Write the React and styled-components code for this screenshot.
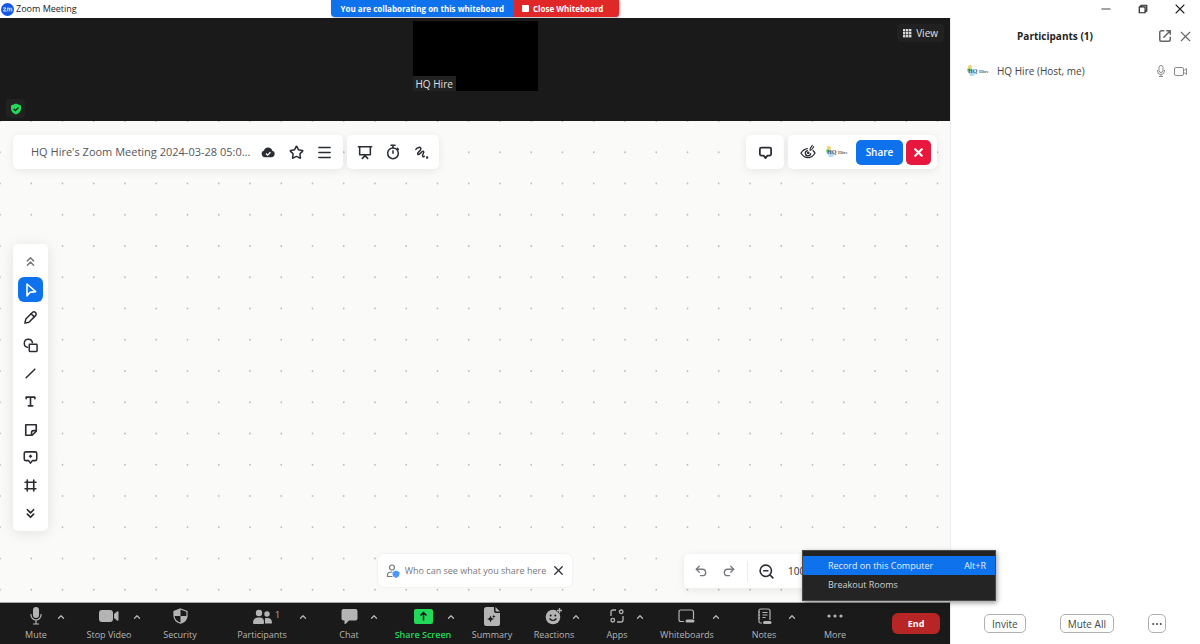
import React, { useState } from "react";
import styled, { createGlobalStyle } from "styled-components";
import {
  ChevronsDown,
  ChevronsUp,
  ChevronUp,
  Frame,
  Menu as MenuIcon,
  Redo2,
  Star,
  Undo2,
  X,
  ZoomIn,
  ZoomOut,
} from "lucide-react";

const GlobalStyle = createGlobalStyle`
  * {
    box-sizing: border-box;
  }
  body {
    margin: 0;
    font-family: "Open Sans", "Noto Sans", sans-serif;
    font-size: 10px;
    line-height: 14px;
    color: #2b2d33;
    background: #fff;
  }
  button {
    font: inherit;
    color: inherit;
    padding: 0;
    border: 0;
    background: none;
    cursor: pointer;
  }
  svg {
    display: block;
    flex: none;
  }
`;

// page
const Page = styled.div`
  display: grid;
  grid-template-columns: minmax(0, 1fr) 250px;
  grid-template-rows: 18px minmax(0, 1fr);
  min-height: 100vh;
`;

// title bar
const TitleBar = styled.header`
  display: grid;
  grid-template-columns: 1fr auto 1fr;
  align-items: start;
`;
const WindowTitle = styled.h1`
  display: flex;
  align-items: center;
  gap: 2px;
  height: 18px;
  margin: 0;
  padding-left: 1px;
  font-size: 9px;
  font-weight: 400;
  color: #222;
`;
const Banner = styled.div`
  display: flex;
  height: 17px;
  border-radius: 0 0 4px 4px;
  overflow: hidden;
  font-size: 8px;
  font-weight: 700;
  line-height: 17px;
  color: #fff;
  background: #0e72ed;
  box-shadow: 1px 1px 3px rgba(0, 0, 0, 0.3);
`;
const BannerText = styled.span`
  padding: 0 10px;
`;
const BannerButton = styled.button`
  display: flex;
  align-items: center;
  gap: 4px;
  padding: 0 16px 0 8px;
  background: #e02828;
`;
const StopSquare = styled.span`
  width: 7px;
  height: 7px;
  border-radius: 1px;
  background: #fff;
`;
const WindowControls = styled.div`
  display: flex;
  justify-content: flex-end;
  align-items: center;
  gap: 17px;
  padding-right: 10px;
  color: #222;
`;
const WindowButton = styled.button`
  display: grid;
  place-items: center;
  width: 20px;
  height: 18px;
`;

// meeting area
const Main = styled.main`
  display: flex;
  flex-direction: column;
`;
const VideoStrip = styled.section`
  display: grid;
  grid-template-columns: 1fr auto 1fr;
  height: 103px;
  padding: 3px 6px;
  background: #1a1a1a;
  color: #e0e0e0;
`;
const ShieldButton = styled.button`
  align-self: end;
  display: grid;
  place-items: center;
  width: 19px;
  height: 19px;
  border-radius: 4px;
  background: #222;
`;
const Thumbnail = styled.div`
  display: flex;
  align-items: flex-end;
  width: 125px;
  height: 70px;
  background: #000;
`;
const ThumbnailName = styled.span`
  padding: 0 3px;
  height: 15px;
  line-height: 16px;
  background: #222;
`;
const ViewButton = styled.button`
  justify-self: end;
  display: flex;
  align-items: center;
  gap: 4px;
  height: 18px;
  margin-top: 3px;
  padding: 0 6px;
  border-radius: 4px;
  background: #212121;
`;

// whiteboard
const Board = styled.section`
  flex: 1;
  position: relative;
  display: flex;
  flex-direction: column;
  padding: 14px 13px;
  background: #fafaf9;
`;
const DotLayer = styled.svg`
  position: absolute;
  inset: 0;
  width: 100%;
  height: 100%;
`;
const BoardRow = styled.div`
  position: relative;
  display: flex;
  gap: 4px;
`;
const Spacer = styled.div`
  flex: 1;
`;
const Card = styled.div`
  display: flex;
  align-items: center;
  height: 34px;
  padding: 0 ${(props) => props.$pad || 5}px;
  border-radius: 5px;
  background: #fff;
  box-shadow: 0 2px 8px rgba(0, 0, 0, 0.08);
`;
const BoardTitle = styled.span`
  width: 222px;
  padding-left: 13px;
  margin-right: 14px;
  flex: none;
  white-space: nowrap;
  font-size: 11px;
  color: #55565b;
`;
const IconButton = styled.button`
  display: grid;
  place-items: center;
  width: 28px;
  height: 25px;
  color: ${(props) => props.$color || "#2b2d36"};
`;
const Avatar = styled.svg`
  width: 22px;
  height: 14px;
`;
const ProfileButton = styled.button`
  margin: 0 8px 0 4px;
`;
const ShareButton = styled.button`
  height: 25px;
  width: 47px;
  margin-right: 3px;
  border-radius: 5px;
  font-size: 10px;
  font-weight: 600;
  color: #fff;
  background: #0e72ed;
`;
const CloseBoardButton = styled.button`
  display: grid;
  place-items: center;
  width: 25px;
  height: 25px;
  border-radius: 5px;
  color: #fff;
  background: #e8173d;
`;
const ToolRail = styled.nav`
  position: relative;
  display: flex;
  flex-direction: column;
  gap: 3px;
  width: 35px;
  margin: 75px 0 auto;
  padding: 5px;
  border-radius: 5px;
  background: #fff;
  box-shadow: 0 2px 14px rgba(0, 0, 0, 0.1);
`;
const RailButton = styled.button`
  display: grid;
  place-items: center;
  width: 25px;
  height: 25px;
  border-radius: 6px;
  color: ${(props) => (props.$active ? "#fff" : props.$muted ? "#77787d" : "#2b2d33")};
  background: ${(props) => (props.$active ? "#0e72ed" : "transparent")};
`;
const BottomRow = styled.div`
  position: relative;
  display: grid;
  grid-template-columns: 1fr auto 1fr;
  align-items: start;
`;
const PrivacyNote = styled.div`
  grid-column: 2;
  display: flex;
  align-items: center;
  gap: 5px;
  height: 33px;
  padding: 0 6px 0 8px;
  border-radius: 6px;
  font-size: 9px;
  color: #77787d;
  background: #fff;
  box-shadow: 0 0 3px rgba(0, 0, 0, 0.08);
`;
const ZoomCard = styled(Card)`
  justify-self: end;
  width: 253px;
`;
const Divider = styled.span`
  width: 1px;
  height: 20px;
  margin: 0 4px;
  background: #ececec;
`;
const ZoomLevel = styled.span`
  width: 40px;
  padding-left: 8px;
`;

// meeting controls
const ControlBar = styled.footer`
  display: grid;
  grid-template-columns: 72fr 74fr 68fr 96fr 78fr 70fr 68fr 56fr 70fr 70fr 84fr 58fr 86fr;
  height: 42px;
  border-top: 1px solid #a8a8a8;
  background: #1a1a1a;
  color: #b4b4b4;
`;
const ControlCell = styled.div`
  position: relative;
  display: grid;
  justify-items: center;
  align-items: start;
  min-width: 0;
`;
const Control = styled.button`
  grid-area: 1 / 1;
  display: flex;
  flex-direction: column;
  align-items: center;
  gap: 2px;
  padding-top: 3px;
  font-size: 9px;
  white-space: nowrap;
  font-weight: ${(props) => (props.$green ? 600 : 400)};
  color: ${(props) => (props.$green ? "#23d959" : "inherit")};
`;
const ControlIcon = styled.span`
  display: grid;
  place-items: center;
  height: 20px;
`;
const Caret = styled.button`
  grid-area: 1 / 1;
  margin: 9px 0 0 ${(props) => props.$reach}px;
`;
const Count = styled.span`
  grid-area: 1 / 1;
  margin: 5px 0 0 31px;
  font-size: 9px;
  line-height: 14px;
`;
const EndButton = styled.button`
  justify-self: end;
  align-self: center;
  width: 48px;
  height: 21px;
  margin-right: 10px;
  border-radius: 6px;
  font-weight: 700;
  font-size: 9px;
  color: #fff;
  background: #b82525;
`;
const Menu = styled.ul`
  position: absolute;
  left: -4px;
  bottom: 43px;
  z-index: 2;
  width: 194px;
  margin: 0;
  padding: 5px 0 6px;
  list-style: none;
  font-size: 9px;
  border: 1px solid #4a4a4a;
  background: #242424;
  box-shadow: 1px 2px 5px rgba(0, 0, 0, 0.4);
`;
const MenuButton = styled.button`
  display: flex;
  justify-content: space-between;
  align-items: center;
  width: 100%;
  height: 19px;
  padding: 0 9px 0 25px;
  color: #d0d0d0;

  &:hover,
  &[data-active="true"] {
    color: #e6efff;
    background: #0e72ed;
  }
`;

// participants
const Side = styled.aside`
  display: flex;
  flex-direction: column;
  border-left: 1px solid #ececec;
`;
const SideHeader = styled.div`
  display: flex;
  align-items: center;
  gap: 5px;
  height: 36px;
  padding: 0 6px;
  color: #666;
`;
const SideTitle = styled.h2`
  flex: 1;
  margin: 0;
  font-size: 10px;
  font-weight: 700;
  text-align: center;
  color: #222;
`;
const PersonList = styled.ul`
  flex: 1;
  margin: 0;
  padding: 0;
  list-style: none;
`;
const Person = styled.li`
  display: flex;
  align-items: center;
  gap: 8px;
  height: 34px;
  padding: 0 12px 0 16px;
  color: #8a8a8a;
`;
const PersonName = styled.span`
  flex: 1;
  color: #444;
`;
const SideFooter = styled.div`
  display: flex;
  justify-content: space-between;
  align-items: center;
  height: 41px;
  padding: 0 34px 0 33px;
`;
const OutlineButton = styled.button`
  height: 19px;
  padding: 0 ${(props) => props.$pad || 7}px;
  border: 1px solid #b0b0b0;
  border-radius: 5px;
  color: #444;
`;

// icons
const Line = ({ size = 16, width = 2.3, children, ...rest }) => (
  <svg
    width={size}
    height={size}
    viewBox="0 0 24 24"
    fill="none"
    stroke="currentColor"
    strokeWidth={width}
    strokeLinecap="round"
    strokeLinejoin="round"
    aria-hidden="true"
    {...rest}
  >
    {children}
  </svg>
);

const ZoomLogo = () => (
  <svg width="13" height="13" viewBox="0 0 26 26" aria-hidden="true">
    <circle cx="13" cy="13" r="13" fill="#1257e6" />
    <g fill="none" stroke="#dfe8ff" strokeWidth="2" strokeLinecap="round" strokeLinejoin="round">
      <path d="M5 10h5l-5 6h5.500" />
      <path d="M13.500 16v-6M13.500 12c0-2.600 4-2.600 4 0v4M17.500 12c0-2.600 4-2.600 4 0v4" />
    </g>
  </svg>
);

const HqAvatar = () => (
  <Avatar viewBox="0 0 22 14" role="img" aria-label="HQ Hire logo">
    <circle cx="3" cy="3" r="2" fill="#f4cf6b" />
    <circle cx="2" cy="6" r="2" fill="#7fdc6a" />
    <circle cx="5" cy="9" r="3" fill="#a9dcf8" />
    <text x="1" y="9" fontSize="6" fontWeight="700" fontFamily="Liberation Serif, serif" fill="#3c5a70">
      HQ
    </text>
    <text x="12" y="9" fontSize="5" fontWeight="700" fontFamily="Liberation Serif, serif" fill="#666">
      Hire
    </text>
  </Avatar>
);

const ShieldCheck = () => (
  <svg width="12" height="12" viewBox="0 0 24 24" aria-hidden="true">
    <path d="M12 1l10 4v6c0 6-4 10-10 12C6 21 2 17 2 11V5z" fill="#23d959" />
    <path d="M7.500 12l3.200 3.200L17 9" fill="none" stroke="#1a1a1a" strokeWidth="2.600" />
  </svg>
);

const GridIcon = () => (
  <svg width="9" height="9" viewBox="0 0 9 9" fill="#d8d8d8" aria-hidden="true">
    {[0, 3, 6].map((y) => [0, 3, 6].map((x) => <rect key={`${x}${y}`} x={x} y={y} width="2.400" height="2.400" />))}
  </svg>
);

const CloudCheck = () => (
  <svg width="14" height="14" viewBox="0 0 24 24" aria-hidden="true">
    <path d="M7 21a6 6 0 0 1-2-11.600A7.500 7.500 0 0 1 19.300 10 5.600 5.600 0 0 1 18 21z" fill="currentColor" />
    <path d="M8.500 14.500l2.800 2.800 5-5" fill="none" stroke="#fff" strokeWidth="2.200" />
  </svg>
);

const PresentIcon = () => (
  <Line>
    <path d="M2 4h20M4 4v12h16V4M12 16v2M8 21.500l4-4 4 4" />
  </Line>
);

const TimerIcon = () => (
  <Line>
    <circle cx="12" cy="14" r="8" />
    <path d="M9 2h6M12 2v4M12 10v4M18.500 6.500l1.500 1.500" />
  </Line>
);

const SquiggleIcon = () => (
  <Line size={15} width={2.4}>
    <path d="M3 7c2-3 8-5 8-1 0 4-7 6-5 9 3 2 6-6 9-5 3 2-3 5-1 8 1 1.500 2 .5 2.500 0" />
    <circle cx="21" cy="20" r="0.800" fill="currentColor" />
  </Line>
);

const CommentIcon = () => (
  <Line size={15} width={2.8}>
    <path d="M5.500 4h13a2.500 2.500 0 0 1 2.500 2.500v8a2.500 2.500 0 0 1-2.500 2.500H15l-3 4-3-4H5.500A2.500 2.500 0 0 1 3 14.500v-8A2.500 2.500 0 0 1 5.500 4z" />
  </Line>
);

// eye with a small pen over its upper right corner
const FollowIcon = () => (
  <Line size={16} width={2}>
    <path d="M11 7C7 7.300 4 9.800 1.500 13.500 4 18 7.500 20.500 12 20.500s8-2.500 10.500-7c-.8-1.300-1.700-2.500-2.800-3.500" />
    <path d="M11 10a4 4 0 1 0 5 4.500" />
    <circle cx="12.300" cy="13.300" r="1" fill="currentColor" />
    <path d="M15 9.500l.5-3 3-4.500M15.500 9.500l2.500-1.500 2.500-4" strokeWidth="1.600" />
  </Line>
);

const PointerIcon = () => (
  <Line size={16} width={2.4}>
    <path d="M6 3v18l4.500-5.500 8.500-1z" />
  </Line>
);

const PenIcon = () => (
  <Line size={15} width={2.400}>
    <path d="M3 21l1.500-6.500L15 4a3.500 3.500 0 0 1 5 5L9.500 19.500z" />
    <path d="M13 6l5 5" />
  </Line>
);

const ShapesIcon = () => (
  <Line size={15} width={2.400}>
    <path d="M7.500 15A6.500 6.500 0 1 1 15 7.500" />
    <rect x="10" y="10" width="12.500" height="11.500" rx="1" />
  </Line>
);

const SlashIcon = () => (
  <Line size={13} width={2.800}>
    <path d="M4 20L20 4" />
  </Line>
);

const TextIcon = () => (
  <Line size={13} width={3}>
    <path d="M4 7V4h16v3M12 4v16M8 20h8" />
  </Line>
);

const NoteIcon = () => (
  <Line size={14} width={2.800}>
    <path d="M3 3h18v11l-7 7H3z" />
    <path d="M21 13h-5a3 3 0 0 0-3 3v5" />
  </Line>
);

const CommentAddIcon = () => (
  <Line size={15} width={2.500}>
    <path d="M4.500 3h15A2.500 2.500 0 0 1 22 5.500v9a2.500 2.500 0 0 1-2.500 2.500H15l-3 4-3-4H4.500A2.500 2.500 0 0 1 2 14.500v-9A2.500 2.500 0 0 1 4.500 3z" />
    <path d="M12 8.500v3M10.500 10h3" />
  </Line>
);

const PrivacyIcon = () => (
  <svg width="14" height="14" viewBox="0 0 28 28" aria-hidden="true">
    <g fill="none" stroke="#77787d" strokeWidth="2.400">
      <circle cx="12" cy="7" r="5" />
      <path d="M13 25H3v-3c0-5 4-6 9-6" />
    </g>
    <path d="M20 13l7 3v4c0 4-3 6-7 8-4-2-7-4-7-8v-4z" fill="#4a98f7" />
  </svg>
);

const MicIcon = () => (
  <svg width="12" height="18" viewBox="0 0 12 18" aria-hidden="true">
    <rect x="3" y="0" width="6" height="11" rx="3" fill="currentColor" />
    <path d="M1 7v1a5 5 0 0 0 10 0V7M6 13v4M3 17h6" fill="none" stroke="currentColor" strokeWidth="1.200" />
  </svg>
);

const VideoIcon = () => (
  <svg width="20" height="12" viewBox="0 0 20 12" fill="currentColor" aria-hidden="true">
    <rect width="14" height="12" rx="3" />
    <path d="M15 4l3-2.500q1.500-.8 1.500.8v7.400q0 1.600-1.500.8L15 8z" />
  </svg>
);

const SecurityIcon = () => (
  <svg width="15" height="16" viewBox="0 0 15 16" aria-hidden="true">
    <path d="M7.500 1l6.500 2.500V8c0 3.500-3 6-6.500 7.300C4 14 1 11.500 1 8V3.500z" fill="none" stroke="currentColor" strokeWidth="1.200" />
    <path d="M7.500 1v7H1V3.500zM7.500 8H14c0 3.500-3 6-6.500 7.300z" fill="currentColor" />
  </svg>
);

const PeopleIcon = () => (
  <svg width="19" height="15" viewBox="0 0 19 15" fill="currentColor" aria-hidden="true">
    <circle cx="6" cy="4" r="3.200" />
    <path d="M0 14c0-4 2-5.500 6-5.500s5 1.500 5 5.500q0 1-1 1H1q-1 0-1-1z" />
    <circle cx="14" cy="5" r="2.700" />
    <path d="M12 9.300c5-1 7 1 7 4.700q0 .5-1 .5h-6z" />
  </svg>
);

const ChatIcon = () => (
  <svg width="17" height="15" viewBox="0 0 17 15" fill="currentColor" aria-hidden="true">
    <path d="M2.500 0h12q2 0 2 2v7.500q0 2-2 2H8L4.500 15q-1 .5-1-.6v-3h-1q-2 0-2-2V2q0-2 2-2z" />
  </svg>
);

const ShareScreenIcon = () => (
  <svg width="19" height="15" viewBox="0 0 19 15" aria-hidden="true">
    <rect width="19" height="15" rx="2" fill="#23d959" />
    <path d="M9.500 11.500V4M6.500 6.500l3-3 3 3" fill="none" stroke="#1a1a1a" strokeWidth="1.500" />
  </svg>
);

const SummaryIcon = () => (
  <svg width="16" height="19" viewBox="0 0 16 19" aria-hidden="true">
    <path d="M2.500 0H10v4q0 2 2 2h4v10.500q0 2.500-2.500 2.500h-11Q0 19 0 16.500v-14Q0 0 2.500 0z" fill="currentColor" />
    <path d="M11.500 0L16 4.500h-3.500q-1 0-1-1z" fill="currentColor" />
    <path d="M6.500 8.500l1 2.500 2.500 1-2.500 1-1 2.500-1-2.500L3 12l2.500-1zM9.800 7.800l.5 1.300 1.400.5-1.400.5-.5 1.300-.5-1.300L8 9.600l1.300-.5z" fill="#1a1a1a" />
  </svg>
);

const ReactionIcon = () => (
  <svg width="18" height="18" viewBox="0 0 18 18" aria-hidden="true">
    <circle cx="8" cy="10" r="7.300" fill="currentColor" />
    <circle cx="5.700" cy="8.500" r="1" fill="#1a1a1a" />
    <circle cx="10.300" cy="8.500" r="1" fill="#1a1a1a" />
    <path d="M4.500 11.500q3.500 4 7 0" fill="none" stroke="#1a1a1a" strokeWidth="1.200" />
    <path d="M14.500 0v6M11.500 3h6" stroke="#1a1a1a" strokeWidth="3" />
    <path d="M14.500 1v5M12 3.500h5" stroke="currentColor" strokeWidth="1.300" />
  </svg>
);

const AppsIcon = () => (
  <svg width="14" height="14" viewBox="0 0 14 14" fill="none" stroke="currentColor" strokeWidth="1.300" aria-hidden="true">
    <path d="M1 7V3q0-2 2-2h3M13 7v4q0 2-2 2H7" />
    <circle cx="11.200" cy="2.800" r="1.800" />
    <circle cx="2.800" cy="11.200" r="1.800" />
  </svg>
);

const WhiteboardIcon = () => (
  <svg width="17" height="14" viewBox="0 0 17 14" aria-hidden="true">
    <path d="M6 12.500H3q-2 0-2-2V3q0-2 2-2h10.500q2 0 2 2v7" fill="none" stroke="currentColor" strokeWidth="1.200" />
    <rect x="7.500" y="10.500" width="9" height="3" rx="1.500" fill="currentColor" />
  </svg>
);

const NotesIcon = () => (
  <svg width="15" height="17" viewBox="0 0 15 17" aria-hidden="true">
    <path
      d="M5 15H3.500q-1.500 0-1.500-1.500v-11Q2 1 3.500 1H11q2 0 2 2v9M1 4h2M1 7h2M1 10h2M5.500 4.500h5M5.500 7h5M5.500 9.500h3"
      fill="none"
      stroke="currentColor"
      strokeWidth="1.200"
    />
    <rect x="6" y="13" width="8.500" height="3" rx="1.500" fill="currentColor" />
  </svg>
);

const DotsIcon = ({ width = 16 }) => (
  <svg width={width} height="4" viewBox="0 0 16 4" fill="currentColor" aria-hidden="true">
    <circle cx="2" cy="2" r="1.600" />
    <circle cx="8" cy="2" r="1.600" />
    <circle cx="14" cy="2" r="1.600" />
  </svg>
);

const PopOutIcon = () => (
  <Line size={14} width={2.600}>
    <path d="M10 3H6a3 3 0 0 0-3 3v12a3 3 0 0 0 3 3h12a3 3 0 0 0 3-3v-4M15 3h6v6M21 3L10 14" />
  </Line>
);

const MicOutline = () => (
  <svg width="10" height="12" viewBox="0 0 10 12" fill="none" stroke="currentColor" aria-hidden="true">
    <rect x="3" y="0.500" width="4" height="7" rx="2" />
    <path d="M1.500 5v1a3.500 3.500 0 0 0 7 0V5M5 9.500v2M3 11.500h4" />
  </svg>
);

const VideoOutline = () => (
  <svg width="14" height="9" viewBox="0 0 14 9" fill="none" stroke="currentColor" aria-hidden="true">
    <rect x="0.500" y="0.500" width="9" height="8" rx="1.500" />
    <path d="M10 3.500l2.500-2v6l-2.500-2" />
  </svg>
);

// one tile holds 4 x 4 dots
const steps = [0, 1, 2, 3];
const DotGrid = () => (
  <DotLayer aria-hidden="true">
    <defs>
      <pattern id="dots" x="-4" y="-4" width="125" height="125" patternUnits="userSpaceOnUse">
        {steps.map((row) =>
          steps.map((col) => (
            <circle key={`${row}-${col}`} cx={4 + col * 31.25} cy={4 + row * 31.25} r="0.9" fill="#bdbdbd" />
          ))
        )}
      </pattern>
    </defs>
    <rect width="100%" height="100%" fill="url(#dots)" />
  </DotLayer>
);

const railTools = [
  { name: "Scroll up", icon: <ChevronsUp size={15} strokeWidth={2.3} />, muted: true },
  { name: "Select", icon: <PointerIcon /> },
  { name: "Pen", icon: <PenIcon /> },
  { name: "Shapes", icon: <ShapesIcon /> },
  { name: "Line", icon: <SlashIcon /> },
  { name: "Text", icon: <TextIcon /> },
  { name: "Sticky note", icon: <NoteIcon /> },
  { name: "Comment", icon: <CommentAddIcon /> },
  { name: "Frame", icon: <Frame size={13} strokeWidth={3} /> },
  { name: "Scroll down", icon: <ChevronsDown size={15} strokeWidth={2.8} /> },
];

// reach is how far the caret sits from the icon
const controls = [
  { label: "Mute", icon: <MicIcon />, reach: 49 },
  { label: "Stop Video", icon: <VideoIcon />, reach: 56 },
  { label: "Security", icon: <SecurityIcon /> },
  { label: "Participants", icon: <PeopleIcon />, reach: 82, count: 1 },
  { label: "Chat", icon: <ChatIcon />, reach: 50 },
  { label: "Share Screen", icon: <ShareScreenIcon />, reach: 56, green: true },
  { label: "Summary", icon: <SummaryIcon /> },
  { label: "Reactions", icon: <ReactionIcon />, reach: 44 },
  { label: "Apps", icon: <AppsIcon />, reach: 46 },
  { label: "Whiteboards", icon: <WhiteboardIcon />, reach: 58 },
  { label: "Notes", icon: <NotesIcon />, reach: 56 },
];

function App() {
  const [tool, setTool] = useState("Select");
  const [menuOpen, setMenuOpen] = useState(true);

  return (
    <>
      <GlobalStyle />
      <Page>
        <TitleBar>
          <WindowTitle>
            <ZoomLogo />
            Zoom Meeting
          </WindowTitle>
          <Banner>
            <BannerText>You are collaborating on this whiteboard</BannerText>
            <BannerButton>
              <StopSquare />
              Close Whiteboard
            </BannerButton>
          </Banner>
        </TitleBar>
        <WindowControls>
          <WindowButton aria-label="Minimize">
            <Line size={10} width={2}>
              <path d="M2 12h20" />
            </Line>
          </WindowButton>
          <WindowButton aria-label="Restore">
            <Line size={10} width={2.8}>
              <path d="M3 7h14v14H3zM7 7V3h14v14h-4" />
            </Line>
          </WindowButton>
          <WindowButton aria-label="Close">
            <X size={16} strokeWidth={1.6} />
          </WindowButton>
        </WindowControls>

        <Main>
          <VideoStrip>
            <ShieldButton aria-label="Meeting information">
              <ShieldCheck />
            </ShieldButton>
            <Thumbnail>
              <ThumbnailName>HQ Hire</ThumbnailName>
            </Thumbnail>
            <ViewButton>
              <GridIcon />
              View
            </ViewButton>
          </VideoStrip>

          <Board>
            <DotGrid />
            <BoardRow>
              <Card>
                <BoardTitle>HQ Hire's Zoom Meeting 2024-03-28 05:0...</BoardTitle>
                <IconButton aria-label="Saved">
                  <CloudCheck />
                </IconButton>
                <IconButton aria-label="Star">
                  <Star size={15} strokeWidth={2.4} />
                </IconButton>
                <IconButton aria-label="Menu">
                  <MenuIcon size={17} />
                </IconButton>
              </Card>
              <Card $pad={4}>
                <IconButton aria-label="Present">
                  <PresentIcon />
                </IconButton>
                <IconButton aria-label="Timer">
                  <TimerIcon />
                </IconButton>
                <IconButton aria-label="Laser pointer">
                  <SquiggleIcon />
                </IconButton>
              </Card>
              <Spacer />
              <Card>
                <IconButton aria-label="Comments">
                  <CommentIcon />
                </IconButton>
              </Card>
              <Card $pad={6}>
                <IconButton aria-label="Follow">
                  <FollowIcon />
                </IconButton>
                <ProfileButton>
                  <HqAvatar />
                </ProfileButton>
                <ShareButton>Share</ShareButton>
                <CloseBoardButton aria-label="Close whiteboard">
                  <X size={13} strokeWidth={4} />
                </CloseBoardButton>
              </Card>
            </BoardRow>

            <ToolRail aria-label="Tools">
              {railTools.map(({ name, icon, muted }) => (
                <RailButton
                  key={name}
                  aria-label={name}
                  $active={tool === name}
                  $muted={muted}
                  onClick={() => setTool(name)}
                >
                  {icon}
                </RailButton>
              ))}
            </ToolRail>

            <BottomRow>
              <PrivacyNote>
                <PrivacyIcon />
                Who can see what you share here
                <button aria-label="Dismiss">
                  <X size={15} color="#2b2d33" />
                </button>
              </PrivacyNote>
              <ZoomCard $pad={3}>
                <IconButton aria-label="Undo" $color="#77787d">
                  <Undo2 size={14} strokeWidth={2.3} />
                </IconButton>
                <IconButton aria-label="Redo" $color="#77787d">
                  <Redo2 size={14} strokeWidth={2.3} />
                </IconButton>
                <Divider />
                <IconButton aria-label="Zoom out">
                  <ZoomOut size={17} strokeWidth={2.3} />
                </IconButton>
                <ZoomLevel>100%</ZoomLevel>
                <IconButton aria-label="Zoom in">
                  <ZoomIn size={17} strokeWidth={2.3} />
                </IconButton>
              </ZoomCard>
            </BottomRow>
          </Board>

          <ControlBar>
            {controls.map(({ label, icon, reach, count, green }) => (
              <ControlCell key={label}>
                <Control $green={green}>
                  <ControlIcon>{icon}</ControlIcon>
                  {label}
                </Control>
                {count && <Count>{count}</Count>}
                {reach && (
                  <Caret aria-label={`${label} options`} $reach={reach}>
                    <ChevronUp size={10} strokeWidth={3} />
                  </Caret>
                )}
              </ControlCell>
            ))}
            <ControlCell>
              <Control onClick={() => setMenuOpen(!menuOpen)}>
                <ControlIcon>
                  <DotsIcon />
                </ControlIcon>
                More
              </Control>
              {menuOpen && (
                <Menu>
                  <li>
                    <MenuButton data-active="true">
                      <span>Record on this Computer</span>
                      <span>Alt+R</span>
                    </MenuButton>
                  </li>
                  <li>
                    <MenuButton>Breakout Rooms</MenuButton>
                  </li>
                </Menu>
              )}
            </ControlCell>
            <EndButton>End</EndButton>
          </ControlBar>
        </Main>

        <Side>
          <SideHeader>
            <SideTitle>Participants (1)</SideTitle>
            <button aria-label="Pop out">
              <PopOutIcon />
            </button>
            <button aria-label="Close panel">
              <X size={17} strokeWidth={1.6} />
            </button>
          </SideHeader>
          <PersonList>
            <Person>
              <HqAvatar />
              <PersonName>HQ Hire (Host, me)</PersonName>
              <MicOutline />
              <VideoOutline />
            </Person>
          </PersonList>
          <SideFooter>
            <OutlineButton>Invite</OutlineButton>
            <OutlineButton>Mute All</OutlineButton>
            <OutlineButton aria-label="More options" $pad={3}>
              <DotsIcon width={10} />
            </OutlineButton>
          </SideFooter>
        </Side>
      </Page>
    </>
  );
}

export default App;
